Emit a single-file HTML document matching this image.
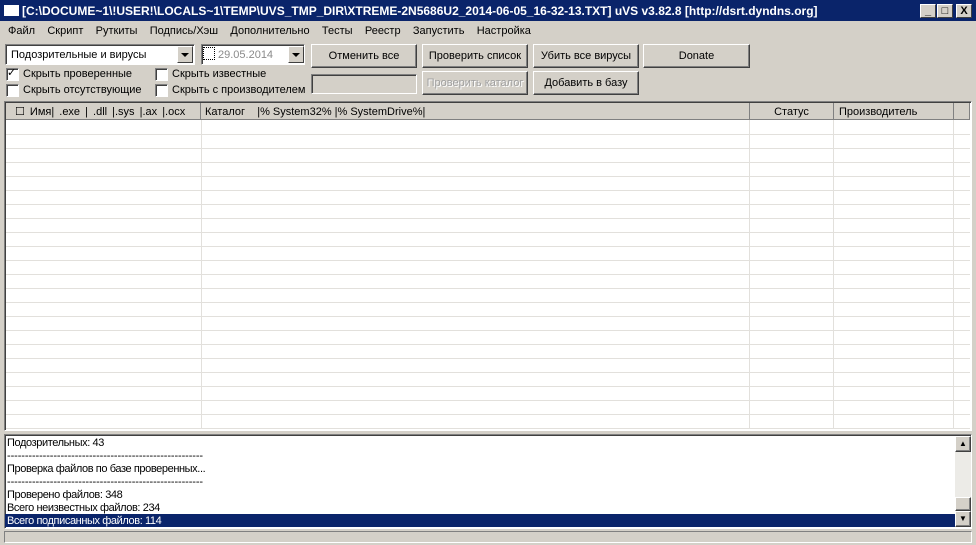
<!DOCTYPE html>
<html><head><meta charset="utf-8"><style>
*{box-sizing:border-box;margin:0;padding:0}
body{width:976px;height:545px;background:#d4d0c8;font-family:"Liberation Sans","DejaVu Sans",sans-serif;font-size:11px;color:#000;position:relative;overflow:hidden}
.a{position:absolute}
.title{left:0;top:0;width:976px;height:21px;background:#0a246a;color:#fff;font-weight:bold;font-size:12px;line-height:23px;padding-left:22px;white-space:nowrap}
.ticon{left:4px;top:5px;width:15px;height:11px;background:#fff;border-top:2px solid #fff}
.tb{top:4px;width:16px;height:14px;background:#d4d0c8;border:1px solid;border-color:#fff #404040 #404040 #fff;color:#000;font-size:11px;line-height:12px;text-align:center;font-weight:bold}
.menu span{margin-right:12.3px}
.btn{background:#d4d0c8;border:1px solid;border-color:#fff #404040 #404040 #fff;box-shadow:inset -1px -1px #808080;text-align:center;line-height:22px;height:24px}
.sunk{border:1px solid;border-color:#808080 #fff #fff #808080;box-shadow:inset 1px 1px #404040;background:#fff}
.cb{width:13px;height:13px;background:#fff;border:1px solid;border-color:#808080 #fff #fff #808080;box-shadow:inset 1px 1px #404040}
.arr{width:16px;height:17px;background:#d4d0c8;border:1px solid;border-color:#fff #404040 #404040 #fff}
.arr:after{content:"";position:absolute;left:3px;top:6px;border:4px solid transparent;border-top:4px solid #000;border-bottom:0}
.hd{top:103px;height:17px;background:#d4d0c8;border-right:1px solid #808080;border-bottom:1px solid #808080;line-height:19px;white-space:nowrap}
.log div{height:13px;line-height:14px;padding-left:2px;font-size:11px;letter-spacing:-0.4px;white-space:nowrap}
</style></head><body>
<div class="a title"><div class="a ticon"></div>[C:\DOCUME~1\!USER!\LOCALS~1\TEMP\UVS_TMP_DIR\XTREME-2N5686U2_2014-06-05_16-32-13.TXT] uVS v3.82.8 [http://dsrt.dyndns.org]</div>
<div class="a tb" style="left:920px">_</div><div class="a tb" style="left:937px">□</div><div class="a tb" style="left:956px">X</div>
<div class="a menu" style="left:8px;top:25px;white-space:nowrap"><span>Файл</span><span>Скрипт</span><span>Руткиты</span><span>Подпись/Хэш</span><span>Дополнительно</span><span>Тесты</span><span>Реестр</span><span>Запустить</span><span>Настройка</span></div>

<div class="a sunk" style="left:5px;top:44px;width:190px;height:21px;line-height:21px;padding-left:5px">Подозрительные и вирусы</div>
<div class="a arr" style="left:177px;top:46px"></div>
<div class="a sunk" style="left:201px;top:44px;width:104px;height:21px;line-height:21px;padding-left:16px;color:#8a8a8a;background:#fff">29.05.2014</div>
<div class="a" style="left:203px;top:47px;width:12px;height:13px;border:1px dotted #000"></div>
<div class="a arr" style="left:288px;top:46px"></div>

<div class="a btn" style="left:311px;top:44px;width:106px">Отменить все</div>
<div class="a btn" style="left:422px;top:44px;width:106px">Проверить список</div>
<div class="a btn" style="left:533px;top:44px;width:106px">Убить все вирусы</div>
<div class="a btn" style="left:643px;top:44px;width:107px">Donate</div>
<div class="a sunk" style="left:311px;top:74px;width:106px;height:20px;background:#d4d0c8"></div>
<div class="a btn" style="left:422px;top:71px;width:106px;color:#a0a0a0;text-shadow:1px 1px #fff">Проверить каталог</div>
<div class="a btn" style="left:533px;top:71px;width:106px">Добавить в базу</div>

<div class="a cb" style="left:6px;top:68px"></div><div class="a" style="left:7px;top:66px;font-size:11px;font-weight:bold">✓</div>
<div class="a" style="left:23px;top:68px">Скрыть проверенные</div>
<div class="a cb" style="left:6px;top:84px"></div><div class="a" style="left:23px;top:84px">Скрыть отсутствующие</div>
<div class="a cb" style="left:155px;top:68px"></div><div class="a" style="left:172px;top:68px">Скрыть известные</div>
<div class="a cb" style="left:155px;top:84px"></div><div class="a" style="left:172px;top:84px">Скрыть с производителем</div>

<div class="a sunk" style="left:4px;top:101px;width:968px;height:330px;background:#fff"></div>
<div class="a" style="left:6px;top:121px;width:964px;height:308px;background:repeating-linear-gradient(to bottom,transparent 0,transparent 13px,#e2e0dc 13px,#e2e0dc 14px)"></div>
<div class="a" style="left:201px;top:120px;width:1px;height:309px;background:#e2e0dc"></div>
<div class="a" style="left:749px;top:120px;width:1px;height:309px;background:#e2e0dc"></div>
<div class="a" style="left:833px;top:120px;width:1px;height:309px;background:#e2e0dc"></div>
<div class="a" style="left:953px;top:120px;width:1px;height:309px;background:#e2e0dc"></div>
<div class="a hd" style="left:6px;width:195px;padding-left:9px;word-spacing:2px">☐ Имя| .exe | .dll |.sys |.ax |.ocx</div>
<div class="a hd" style="left:201px;width:549px;padding-left:4px">Каталог &nbsp;&nbsp;&nbsp;|% System32% |% SystemDrive%|</div>
<div class="a hd" style="left:750px;width:84px;text-align:center">Статус</div>
<div class="a hd" style="left:834px;width:120px;padding-left:5px">Производитель</div>
<div class="a hd" style="left:954px;width:16px"></div>

<div class="a sunk" style="left:4px;top:434px;width:968px;height:95px"></div>
<div class="a log" style="left:5px;top:436px;width:950px">
<div>Подозрительных: 43</div>
<div style="letter-spacing:-0.1px">-------------------------------------------------------</div>
<div>Проверка файлов по базе проверенных...</div>
<div style="letter-spacing:-0.1px">-------------------------------------------------------</div>
<div>Проверено файлов: 348</div>
<div>Всего неизвестных файлов: 234</div>
<div style="background:#0a246a;color:#fff">Всего подписанных файлов: 114</div>
</div>
<div class="a" style="left:955px;top:436px;width:16px;height:91px;background:#ecebe7"></div>
<div class="a btn" style="left:955px;top:436px;width:16px;height:16px;line-height:14px;font-size:8px">▲</div>
<div class="a btn" style="left:955px;top:497px;width:16px;height:14px"></div>
<div class="a btn" style="left:955px;top:511px;width:16px;height:16px;line-height:14px;font-size:8px">▼</div>
<div class="a" style="left:4px;top:531px;width:968px;height:12px;border:1px solid;border-color:#808080 #fff #fff #808080"></div>
</body></html>
